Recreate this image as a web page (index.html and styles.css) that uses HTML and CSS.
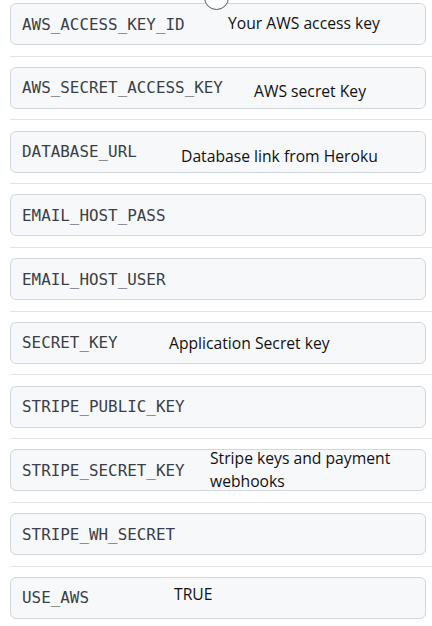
FILE: index.html
```html
<!DOCTYPE html>
<html>
<head>
<meta charset="utf-8">
<link rel="stylesheet" href="styles.css">
</head>
<body>
<div class="list">
  <div class="row"><div class="field">AWS_ACCESS_KEY_ID</div><span class="note n1">Your AWS access key</span></div>
  <div class="row"><div class="field">AWS_SECRET_ACCESS_KEY</div><span class="note n2">AWS secret Key</span></div>
  <div class="row"><div class="field">DATABASE_URL</div><span class="note n3">Database link from Heroku</span></div>
  <div class="row"><div class="field">EMAIL_HOST_PASS</div></div>
  <div class="row"><div class="field">EMAIL_HOST_USER</div></div>
  <div class="row"><div class="field">SECRET_KEY</div><span class="note n4">Application Secret key</span></div>
  <div class="row"><div class="field">STRIPE_PUBLIC_KEY</div></div>
  <div class="row"><div class="field">STRIPE_SECRET_KEY</div><span class="note n5">Stripe keys and payment<br>webhooks</span></div>
  <div class="row"><div class="field">STRIPE_WH_SECRET</div></div>
  <div class="row last"><div class="field">USE_AWS</div><span class="note n6">TRUE</span></div>
</div>
<div class="knob"></div>
</body>
</html>
```
FILE: styles.css
```css
html, body {
  margin: 0;
  padding: 0;
  background: #ffffff;
  overflow: hidden;
}
body {
  width: 432px;
  height: 626px;
  position: relative;
}
.list {
  display: flex;
  flex-direction: column;
  padding-top: 3px;
  padding-left: 10px;
}
.row {
  position: relative;
  padding-bottom: 10.5px;
  margin-bottom: 10.25px;
  border-bottom: 1px solid #e1e5ea;
}
.row.last {
  border-bottom: none;
}
.field {
  box-sizing: border-box;
  width: 416px;
  height: 42px;
  border: 1px solid #d0d7de;
  border-radius: 6px;
  background: #f6f8fa;
  display: flex;
  align-items: center;
  padding-left: 11px;
  font-family: "DejaVu Sans Mono", "Liberation Mono", monospace;
  font-size: 15.9px;
  color: #3a3f46;
}
.note {
  position: absolute;
  font-family: "Open Sans", "Liberation Sans", sans-serif;
  font-size: 15.7px;
  color: #111111;
  line-height: 23px;
  white-space: nowrap;
}
.n1 { left: 218px; top: 9px; }
.n2 { left: 244px; top: 13px; }
.n3 { left: 171px; top: 14px; }
.n4 { left: 159px; top: 10px; }
.n5 { left: 200px; top: -2px; }
.n6 { left: 164px; top: 6px; }
.knob {
  position: absolute;
  left: 204px;
  top: -15px;
  width: 23px;
  height: 23px;
  border-radius: 50%;
  background: #ffffff;
  border: 1.5px solid #555a60;
}
```
